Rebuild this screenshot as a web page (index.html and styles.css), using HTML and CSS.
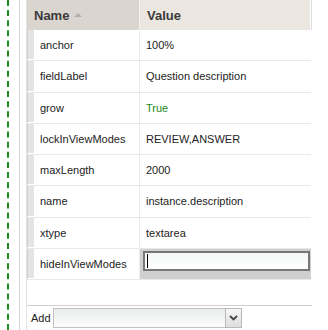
FILE: index.html
```html
<!DOCTYPE html>
<html lang="en">
  <head>
    <meta charset="UTF-8" />
    <title>Property Grid</title>
    <link rel="stylesheet" href="styles.css">
  </head>
  <body>
    <div class="page">
      <div class="rail"></div>
      <div class="panel">
        <div class="grid">
          <div class="grid-header">
            <div class="hd hd-name">Name <span class="sort"></span></div>
            <div class="hd hd-value">Value</div>
          </div>
          <div class="grid-body">
            <div class="row">
              <div class="marker"></div>
              <div class="cell name">anchor</div>
              <div class="cell value">100%</div>
            </div>
            <div class="row">
              <div class="marker"></div>
              <div class="cell name">fieldLabel</div>
              <div class="cell value">Question description</div>
            </div>
            <div class="row">
              <div class="marker"></div>
              <div class="cell name">grow</div>
              <div class="cell value bool">True</div>
            </div>
            <div class="row">
              <div class="marker"></div>
              <div class="cell name">lockInViewModes</div>
              <div class="cell value">REVIEW,ANSWER</div>
            </div>
            <div class="row">
              <div class="marker"></div>
              <div class="cell name">maxLength</div>
              <div class="cell value">2000</div>
            </div>
            <div class="row">
              <div class="marker"></div>
              <div class="cell name">name</div>
              <div class="cell value">instance.description</div>
            </div>
            <div class="row">
              <div class="marker"></div>
              <div class="cell name">xtype</div>
              <div class="cell value">textarea</div>
            </div>
            <div class="row editing">
              <div class="marker"></div>
              <div class="cell name">hideInViewModes</div>
              <div class="cell editor">
                <div class="edit-box"><span class="caret"></span></div>
              </div>
            </div>
          </div>
          <div class="toolbar">
            <span class="add-label">Add</span>
            <div class="combo">
              <div class="combo-input"></div>
              <div class="combo-trigger">
                <svg width="9" height="6" viewBox="0 0 9 6">
                  <path d="M1 1 L4.5 4.5 L8 1" fill="none" stroke="#444" stroke-width="1.8" />
                </svg>
              </div>
            </div>
          </div>
        </div>
      </div>
    </div>
  </body>
</html>
```

FILE: styles.css
```css
* {
  margin: 0;
  padding: 0;
  box-sizing: border-box;
}
body {
  background: #fff;
  font-family: "Liberation Sans", Arial, sans-serif;
  font-size: 11px;
  color: #222;
}
.page {
  display: flex;
  height: 330px;
}
.rail {
  width: 9px;
  border-right: 2px dashed #1e8c1e;
  margin-right: 10px;
}
.panel {
  border-left: 1px solid #d4d4d4;
  padding-left: 6px;
  display: flex;
}
.grid {
  width: 286px;
  border-left: 1px solid #e2e2e2;
  display: flex;
  flex-direction: column;
}
.grid-header {
  display: flex;
  height: 30px;
}
.hd {
  display: flex;
  align-items: center;
  font-weight: bold;
  font-size: 13px;
  color: #3a3a3a;
  padding-left: 7px;
}
.hd-name {
  width: 113px;
  background: #dad5ce;
  border-right: 1px solid #f4f2ef;
}
.hd-value {
  width: 171px;
  background: #ebe6e0;
  border-right: 1px solid #fff;
  box-shadow: 1px 0 0 #dcdcdc;
}
.sort {
  width: 0;
  height: 0;
  border-left: 4px solid transparent;
  border-right: 4px solid transparent;
  border-bottom: 4px solid #b2aea8;
  margin-left: 5px;
}
.grid-body {
  display: flex;
  flex-direction: column;
  height: 275px;
}
.row {
  display: flex;
  height: 31.25px;
  border-bottom: 1px solid #e9e9e9;
  width: 284px;
}
.marker {
  width: 7px;
  background: #e4e4e4;
  border-left: 1px solid #cfcfcf;
  border-bottom: 1px solid #fff;
}
.cell {
  display: flex;
  align-items: center;
}
.name {
  width: 106px;
  padding-left: 6px;
  border-right: 1px solid #ececec;
}
.value {
  flex: 1;
  padding-left: 6px;
}
.bool {
  color: #1a8a1a;
}
.editor {
  flex: 1;
  background: #d0d0d0;
  padding: 2px 1px 9px 3px;
  align-items: flex-start;
}
.edit-box {
  width: 100%;
  height: 20px;
  border: 2px solid #777;
  background: linear-gradient(#f4f8f6, #fff);
  display: flex;
  align-items: center;
  padding-left: 2px;
}
.caret {
  width: 1px;
  height: 14px;
  background: #000;
}
.toolbar {
  border-top: 1px solid #cfcfcf;
  display: flex;
  align-items: center;
  height: 25px;
  padding-left: 4px;
  gap: 2px;
}
.add-label {
  color: #222;
}
.combo {
  display: flex;
  height: 20px;
}
.combo-input {
  width: 172px;
  border: 1px solid #c2c2c2;
  border-right: none;
  background: linear-gradient(#e9eeeb, #fbfbfb);
}
.combo-trigger {
  width: 17px;
  border: 1px solid #b9b9b9;
  background: linear-gradient(#f6f6f6, #dedede);
  display: flex;
  align-items: center;
  justify-content: center;
}
```
